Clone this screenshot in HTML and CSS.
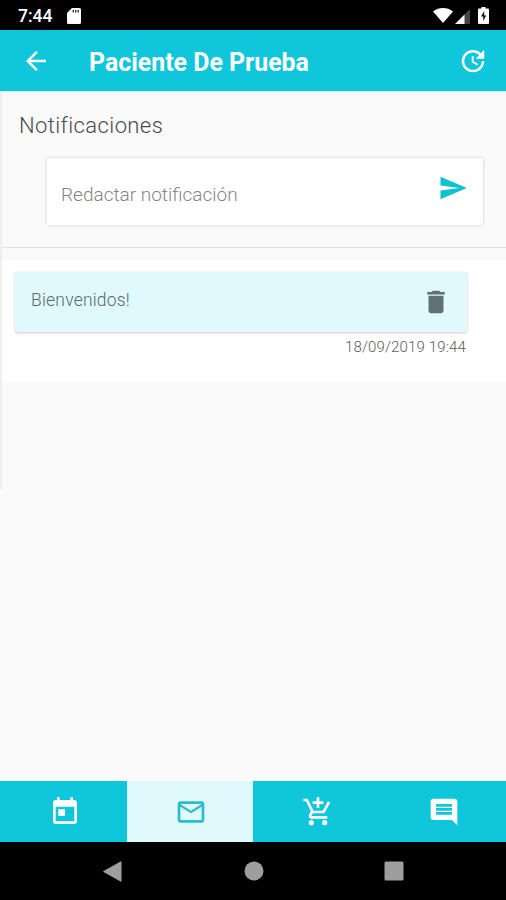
FILE: index.html
```html
<!DOCTYPE html>
<html lang="es">

<head>
  <meta charset="UTF-8">
  <title>Notificaciones</title>
  <link rel="stylesheet" href="styles.css">
</head>

<body>
  <div class="screen">
    <div class="status-bar">
      <span class="clock">7:44</span>
      <svg class="sd-card" viewBox="0 0 14 16">
        <path fill="#fff" d="M5 0h7.500a1.500 1.500 0 0 1 1.500 1.500v13a1.500 1.500 0 0 1-1.500 1.500h-11A1.500 1.500 0 0 1 0 14.500V5z" />
        <path fill="#444" d="M5.500 2h1.500v2.500H5.500zM8 2h1.500v2.500H8zM10.500 2H12v2.500h-1.500z" />
      </svg>
      <div class="status-icons">
        <svg width="20" height="15" viewBox="0 0 20 15">
          <path fill="#fff" d="M0 3.500C6-1.100 14-1.100 20 3.500L10 15z" />
        </svg>
        <svg width="15" height="15" viewBox="0 0 15 15">
          <path fill="#444" d="M15 0v15H9V6z" />
          <path fill="#fff" d="M9.500 5.500V15H0z" />
        </svg>
        <svg width="11" height="17" viewBox="0 0 11 17">
          <path fill="#fff" d="M3.500 0h4v1.500H10a1 1 0 0 1 1 1V16a1 1 0 0 1-1 1H1a1 1 0 0 1-1-1V2.500a1 1 0 0 1 1-1h2.500z" />
          <path fill="#111" d="M6.200 4L3 9.500h2.200V14L8.200 8.500H6.200z" />
        </svg>
      </div>
    </div>

    <header class="header">
      <svg class="icon" viewBox="0 0 24 24"><path d="M20 11H7.830l5.590-5.590L12 4l-8 8 8 8 1.410-1.410L7.830 13H20v-2z" /></svg>
      <h1>Paciente De Prueba</h1>
      <svg class="icon" viewBox="0 0 24 24"><path d="M21 10.120h-6.780l2.740-2.820c-2.730-2.700-7.150-2.800-9.880-.1-2.730 2.710-2.730 7.080 0 9.790s7.150 2.710 9.880 0C18.320 15.650 19 14.080 19 12.100h2c0 1.980-.88 4.550-2.640 6.290-3.510 3.480-9.210 3.480-12.720 0-3.500-3.470-3.530-9.110-.02-12.580s9.140-3.470 12.650 0L21 3v7.120zM12.500 8v4.250l3.500 2.080-.72 1.210L11 13V8h1.500z" /></svg>
    </header>

    <main class="content">
      <section class="compose">
        <h2>Notificaciones</h2>
        <div class="compose-box">
          <span class="placeholder">Redactar notificación</span>
          <svg class="icon send" viewBox="0 0 24 24"><path d="M2.010 21L23 12 2.010 3 2 10l15 2-15 2z" /></svg>
        </div>
      </section>

      <section class="messages">
        <div class="message">
          <span class="message-text">Bienvenidos!</span>
          <svg class="icon delete" viewBox="0 0 24 24"><path d="M6 19c0 1.100.9 2 2 2h8c1.100 0 2-.9 2-2V7H6v12zM19 4h-3.500l-1-1h-5l-1 1H5v2h14V4z" /></svg>
        </div>
        <div class="message-date">18/09/2019 19:44</div>
      </section>
      <div class="edge"></div>
    </main>

    <nav class="tabs">
      <a class="tab"><svg class="icon" viewBox="0 0 24 24"><path d="M19 3h-1V1h-2v2H8V1H6v2H5c-1.110 0-1.990.9-1.990 2L3 19c0 1.100.89 2 2 2h14c1.100 0 2-.9 2-2V5c0-1.100-.9-2-2-2zm0 16H5V8h14v11zM7 10h5v5H7z" /></svg></a>
      <a class="tab active"><svg class="icon" viewBox="0 0 24 24"><path d="M20 4H4c-1.100 0-1.990.9-1.990 2L2 18c0 1.100.9 2 2 2h16c1.100 0 2-.9 2-2V6c0-1.100-.9-2-2-2zm0 14H4V8l8 5 8-5v10zm-8-7L4 6h16l-8 5z" /></svg></a>
      <a class="tab"><svg class="icon" viewBox="0 0 24 24"><path d="M11 9h2V6h3V4h-3V1h-2v3H8v2h3v3zm-4 9c-1.100 0-1.990.9-1.990 2S5.900 22 7 22s2-.9 2-2-.9-2-2-2zm10 0c-1.100 0-1.990.9-1.990 2s.89 2 1.990 2 2-.9 2-2-.9-2-2-2zm-9.830-3.250l.03-.12.9-1.630h7.450c.75 0 1.410-.41 1.750-1.030l3.860-7.010L19.420 4h-.01l-1.100 2-2.760 5H8.530l-.13-.27L6.160 6l-.95-2-.94-2H1v2h2l3.600 7.590-1.350 2.450c-.16.28-.25.61-.25.960 0 1.100.9 2 2 2h12v-2H7.420c-.13 0-.25-.11-.25-.25z" /></svg></a>
      <a class="tab"><svg class="icon" viewBox="0 0 24 24"><path d="M21.990 4c0-1.100-.89-2-1.990-2H4c-1.100 0-2 .9-2 2v12c0 1.100.9 2 2 2h14l4 4-.01-18zM18 14H6v-2h12v2zm0-3H6V9h12v2zm0-3H6V6h12v2z" /></svg></a>
    </nav>

    <div class="nav-bar">
      <svg width="20" height="21" viewBox="0 0 20 21"><path d="M18.500 .5v20q0 .5-1 0L.5 11q-.5-.5 0-1L17.500 .5q1-.5 1 0z" /></svg>
      <svg width="20" height="20" viewBox="0 0 20 20"><circle cx="10" cy="10" r="9.500" /></svg>
      <svg width="20" height="20" viewBox="0 0 20 20"><rect x=".5" y=".5" width="19" height="19" rx="1.500" /></svg>
    </div>
  </div>
</body>

</html>
```
FILE: styles.css
```css
* {
  margin: 0;
  padding: 0;
  box-sizing: border-box;
}

body {
  font-family: Roboto, sans-serif;
  background: #000;
}

.screen {
  display: flex;
  flex-direction: column;
  height: 900px;
}

.icon {
  width: 30px;
  height: 30px;
  fill: currentColor;
  flex-shrink: 0;
}

.status-bar {
  display: flex;
  align-items: center;
  height: 30px;
  padding: 1px 17px 0 18px;
  background: #000;
  color: #fff;
}

.clock {
  width: 49px;
  font-size: 17.5px;
  font-weight: 500;
}

.sd-card {
  width: 14px;
  height: 16px;
}

.status-icons {
  display: flex;
  align-items: center;
  margin-left: auto;
}

.status-icons svg:nth-child(2) {
  margin: 1px 8px 0 2px;
}

.header {
  display: flex;
  align-items: center;
  height: 61px;
  padding: 1px 18px 0 21px;
  background: #0fc6db;
  color: #fff;
}

.header h1 {
  flex: 1;
  margin: 2px 0 0 38px;
  font-size: 24.9px;
  font-weight: 700;
}

.content {
  position: relative;
  flex: 1;
  border-top: 1px solid #e4eeef;
  background: #fafafa;
}

.compose {
  height: 156px;
  padding: 20px 23px 0 19px;
  border-bottom: 1px solid #e2e2e2;
}

.compose h2 {
  height: 27px;
  color: #4a4a4a;
  font-size: 22px;
  font-weight: 300;
  letter-spacing: 0.4px;
  line-height: 28px;
}

.compose-box {
  display: flex;
  justify-content: space-between;
  height: 67px;
  margin: 19px 0 0 28px;
  padding: 15px 15px 0 14px;
  background: #fff;
  box-shadow: 0 0 3px rgba(0, 0, 0, 0.2);
}

.placeholder {
  margin-top: 9px;
  color: #858585;
  font-size: 19px;
  font-weight: 300;
  line-height: 26px;
}

.send {
  color: #0fc1d2;
}

.messages {
  height: 122px;
  margin-top: 12px;
  padding: 12px 39px 0 15px;
  background: #fff;
}

.message {
  display: flex;
  justify-content: space-between;
  height: 60px;
  padding: 15px 16px 0;
  border-radius: 2px;
  background: #e0f9fd;
  box-shadow: 0 1px 3px rgba(0, 0, 0, 0.22);
}

.message-text {
  margin-top: 2px;
  color: #556b6d;
  font-size: 17.5px;
  font-weight: 300;
  letter-spacing: 0.2px;
  line-height: 22px;
}

.delete {
  color: #5f7172;
}

.message-date {
  margin: 5px 1px 0 0;
  color: #5c5c5c;
  font-size: 15px;
  font-weight: 300;
  letter-spacing: 0.15px;
  line-height: 20px;
  text-align: right;
}

.edge {
  position: absolute;
  top: 0;
  left: 0;
  width: 2px;
  height: 398px;
  background: #efeff1;
}

.tabs {
  display: grid;
  grid-template-columns: repeat(4, 1fr);
  height: 61px;
  background: #0fc6db;
  color: #fff;
}

.tab {
  display: flex;
  align-items: center;
  justify-content: center;
  padding: 1px 0 0 3px;
}

.tab .icon {
  width: 32px;
  height: 32px;
}

.tab.active {
  background: #e0f9fd;
  color: #2bbccb;
}

.nav-bar {
  display: flex;
  align-items: center;
  justify-content: space-between;
  height: 58px;
  padding: 0 102px 0 103px;
  background: #000;
  fill: #9e9e9e;
}
```
